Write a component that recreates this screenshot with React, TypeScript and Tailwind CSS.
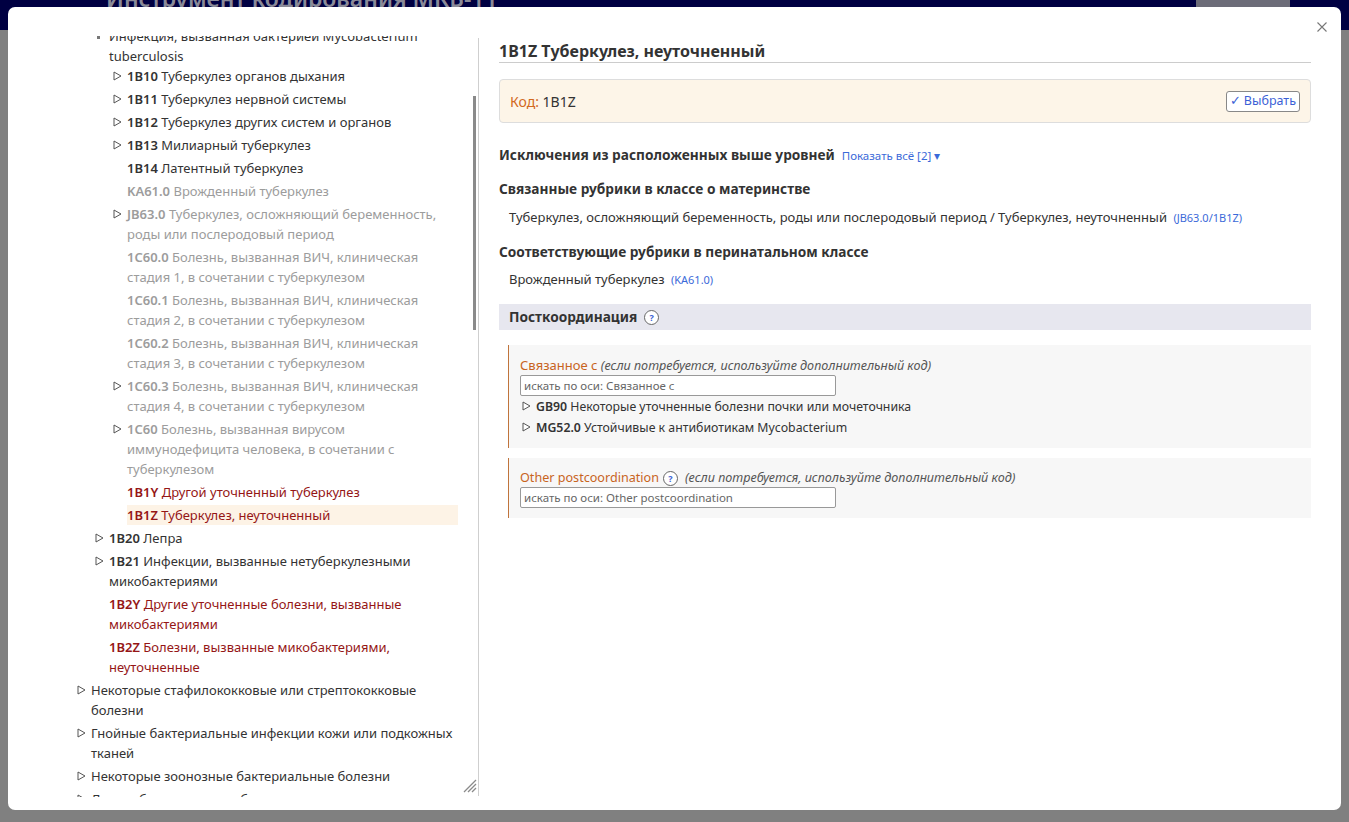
import React from "react";

type Item = {
  level: 1 | 2 | 3;
  code?: string;
  text: string;
  tri?: boolean;
  tone?: "dark" | "gray" | "red";
  selected?: boolean;
  children?: Item[];
  open?: boolean;
};

const Tri = () => (
  <svg width="9" height="10" viewBox="0 0 9 10" className="block">
    <polygon points="1,1 8,5 1,9" fill="white" stroke="#555" strokeWidth="1" />
  </svg>
);

const level3: Item[] = [
  { level: 3, code: "1B10", text: "Туберкулез органов дыхания", tri: true },
  { level: 3, code: "1B11", text: "Туберкулез нервной системы", tri: true },
  { level: 3, code: "1B12", text: "Туберкулез других систем и органов", tri: true },
  { level: 3, code: "1B13", text: "Милиарный туберкулез", tri: true },
  { level: 3, code: "1B14", text: "Латентный туберкулез" },
  { level: 3, code: "KA61.0", text: "Врожденный туберкулез", tone: "gray" },
  { level: 3, code: "JB63.0", text: "Туберкулез, осложняющий беременность, роды или послеродовый период", tri: true, tone: "gray" },
  { level: 3, code: "1C60.0", text: "Болезнь, вызванная ВИЧ, клиническая стадия 1, в сочетании с туберкулезом", tone: "gray" },
  { level: 3, code: "1C60.1", text: "Болезнь, вызванная ВИЧ, клиническая стадия 2, в сочетании с туберкулезом", tone: "gray" },
  { level: 3, code: "1C60.2", text: "Болезнь, вызванная ВИЧ, клиническая стадия 3, в сочетании с туберкулезом", tone: "gray" },
  { level: 3, code: "1C60.3", text: "Болезнь, вызванная ВИЧ, клиническая стадия 4, в сочетании с туберкулезом", tri: true, tone: "gray" },
  { level: 3, code: "1C60", text: "Болезнь, вызванная вирусом иммунодефицита человека, в сочетании с туберкулезом", tri: true, tone: "gray" },
  { level: 3, code: "1B1Y", text: "Другой уточненный туберкулез", tone: "red" },
  { level: 3, code: "1B1Z", text: "Туберкулез, неуточненный", tone: "red", selected: true },
];

const tree: Item[] = [
  { level: 2, text: "Инфекция, вызванная бактерией Mycobacterium tuberculosis", open: true, children: level3 },
  { level: 2, code: "1B20", text: "Лепра", tri: true },
  { level: 2, code: "1B21", text: "Инфекции, вызванные нетуберкулезными микобактериями", tri: true },
  { level: 2, code: "1B2Y", text: "Другие уточненные болезни, вызванные микобактериями", tone: "red" },
  { level: 2, code: "1B2Z", text: "Болезни, вызванные микобактериями, неуточненные", tone: "red" },
  { level: 1, text: "Некоторые стафилококковые или стрептококковые болезни", tri: true },
  { level: 1, text: "Гнойные бактериальные инфекции кожи или подкожных тканей", tri: true },
  { level: 1, text: "Некоторые зоонозные бактериальные болезни", tri: true },
  { level: 1, text: "Другие бактериальные болезни", tri: true },
];

const toneClass = (t?: Item["tone"]) =>
  t === "gray" ? "text-[#9c9c9c]" : t === "red" ? "text-[#951616]" : "text-[#333333]";

const padClass = (l: number) => (l === 1 ? "pl-[69px]" : l === 2 ? "pl-[87px]" : "pl-[105px]");

function TreeNode({ item }: { item: Item }) {
  return (
    <div className="flex flex-col">
      <div className={`flex ${padClass(item.level)}`}>
        <div className="w-[14px] shrink-0 pt-[5px]">
          {item.tri ? <Tri /> : null}
          {item.open ? <div className="ml-[2px] mt-[5px] h-[3px] w-[3px] bg-[#777]" /> : null}
        </div>
        <div
          className={`flex-1 leading-[20px] ${toneClass(item.tone)} ${
            item.selected ? "bg-[#fdf3e6]" : ""
          }`}
        >
          {item.code ? <span className="font-semibold">{item.code}</span> : null}
          {item.code ? " " : null}
          {item.text}
        </div>
      </div>
      {item.children ? (
        <div className="flex flex-col gap-[3px]">
          {item.children.map((c, i) => (
            <TreeNode key={i} item={c} />
          ))}
        </div>
      ) : null}
    </div>
  );
}

const Help = () => (
  <span className="inline-flex h-[15px] w-[15px] items-center justify-center rounded-full border border-[#666] bg-white text-[9px] font-bold leading-none text-[#3b62d4]">
    ?
  </span>
);

export default function App() {
  return (
    <div className="relative h-[822px] w-[1349px] overflow-hidden bg-[#808080] font-['Noto_Sans',sans-serif] text-[13px] text-[#333]">
      {/* background page header */}
      <div className="flex h-[30px] bg-[#000042]">
        <div className="ml-[106px] mt-[-17px] whitespace-nowrap text-[23px] font-semibold leading-[30px] text-[#8a8a98]">
          Инструмент кодирования МКБ-11
        </div>
        <div className="ml-auto mr-[59px] h-[30px] w-[94px] bg-[#6c6c78]" />
      </div>

      {/* modal */}
      <div className="absolute left-[8px] top-[7px] flex h-[803px] w-[1333px] rounded-[7px] bg-white">
        {/* close */}
        <div className="absolute right-[14px] top-[15px]">
          <svg width="10" height="10" viewBox="0 0 10 10">
            <path d="M0.5 0.5 L9.5 9.5 M9.5 0.5 L0.5 9.5" stroke="#777" strokeWidth="1.1" />
          </svg>
        </div>

        {/* left panel */}
        <div className="relative mt-[29px] flex h-[761px] w-[470px] shrink-0">
          <div className="h-full w-[462px] overflow-hidden pr-[12px]">
            <div className="mt-[-10px] flex flex-col gap-[3px]">
              {tree.map((it, i) => (
                <TreeNode key={i} item={it} />
              ))}
            </div>
          </div>
          <div className="h-full w-[8px]">
            <div className="ml-[3px] mt-[60px] h-[234px] w-[2.5px] bg-[#8a8a8a]" />
          </div>
          <div className="absolute bottom-[4px] right-[1px]">
            <svg width="14" height="14" viewBox="0 0 14 14">
              <path d="M13 1 L1 13 M13 5 L5 13 M13 9 L9 13" stroke="#8a8a8a" strokeWidth="1.3" />
            </svg>
          </div>
        </div>
        <div className="mb-[14px] mt-[31px] w-px bg-[#cfcfcf]" />

        {/* right panel */}
        <div className="flex flex-1 flex-col pl-[20px] pr-[30px] pt-[34px]">
          <div className="border-b border-[#cccccc] pb-px text-[16px] font-bold leading-[20px] text-[#333]">
            1B1Z Туберкулез, неуточненный
          </div>

          <div className="mt-[16px] flex h-[44px] items-center justify-between rounded-[4px] border border-[#dddddd] bg-[#fdf5e8] pl-[10px] pr-[10px]">
            <div className="text-[14px]">
              <span className="text-[#d2691e]">Код:</span> <span className="text-[#333]">1B1Z</span>
            </div>
            <div className="flex h-[21px] items-center rounded-[3px] border border-[#888] bg-white px-[3px] text-[12.5px] leading-none text-[#3b5fd6]">
              ✓ Выбрать
            </div>
          </div>

          <div className="mt-[22px] flex items-baseline leading-[20px]">
            <span className="text-[13.7px] font-bold">Исключения из расположенных выше уровней</span>
            <span className="ml-[7px] text-[11.5px] text-[#3b6ad9]">Показать всё [2] ▾</span>
          </div>

          <div className="mt-[13px] text-[13.7px] font-bold leading-[20px]">Связанные рубрики в классе о материнстве</div>
          <div className="mt-[8px] pl-[10px] leading-[20px]">
            Туберкулез, осложняющий беременность, роды или послеродовый период / Туберкулез, неуточненный{" "}
            <span className="ml-[3px] text-[11px] text-[#3b6ad9]">(JB63.0/1B1Z)</span>
          </div>

          <div className="mt-[14px] text-[13.7px] font-bold leading-[20px]">
            Соответствующие рубрики в перинатальном классе
          </div>
          <div className="mt-[7px] pl-[10px] leading-[20px]">
            Врожденный туберкулез <span className="ml-[3px] text-[11px] text-[#3b6ad9]">(KA61.0)</span>
          </div>

          <div className="mt-[14px] flex h-[26px] items-center gap-[7px] bg-[#e7e7ef] pl-[10px] text-[13.7px] font-bold">
            <span>Посткоординация</span>
            <Help />
          </div>

          <div className="ml-[9px] mt-[15px] flex flex-col border-l border-[#c0743c] bg-[#f7f7f7] pb-[10px] pl-[11px] pt-[12px]">
            <div className="leading-[16px]">
              <span className="text-[#c8641e]">Связанное с</span>{" "}
              <span className="text-[12.6px] italic text-[#555]">(если потребуется, используйте дополнительный код)</span>
            </div>
            <div className="mt-[1px] flex h-[21px] w-[316px] items-center rounded-[2px] border border-[#999] bg-white pl-[3px] text-[11.5px] text-[#666]">
              искать по оси: Связанное с
            </div>
            <div className="mt-[1px] flex pl-[2px] text-[12.3px] leading-[20px]">
              <div className="w-[14px] pt-[4px]">
                <Tri />
              </div>
              <div>
                <span className="font-semibold">GB90</span> Некоторые уточненные болезни почки или мочеточника
              </div>
            </div>
            <div className="mt-[1px] flex pl-[2px] text-[12.3px] leading-[20px]">
              <div className="w-[14px] pt-[4px]">
                <Tri />
              </div>
              <div>
                <span className="font-semibold">MG52.0</span> Устойчивые к антибиотикам Mycobacterium
              </div>
            </div>
          </div>

          <div className="ml-[9px] mt-[10px] flex flex-col border-l border-[#c0743c] bg-[#f7f7f7] pb-[10px] pl-[11px] pt-[12px]">
            <div className="flex h-[16px] items-center">
              <span className="text-[12.6px] text-[#c8641e]">Other postcoordination</span>
              <span className="ml-[4px] flex">
                <Help />
              </span>
              <span className="ml-[7px] text-[12.6px] italic text-[#555]">
                (если потребуется, используйте дополнительный код)
              </span>
            </div>
            <div className="mt-[1px] flex h-[21px] w-[316px] items-center rounded-[2px] border border-[#999] bg-white pl-[3px] text-[11.5px] text-[#666]">
              искать по оси: Other postcoordination
            </div>
          </div>
        </div>
      </div>
    </div>
  );
}
